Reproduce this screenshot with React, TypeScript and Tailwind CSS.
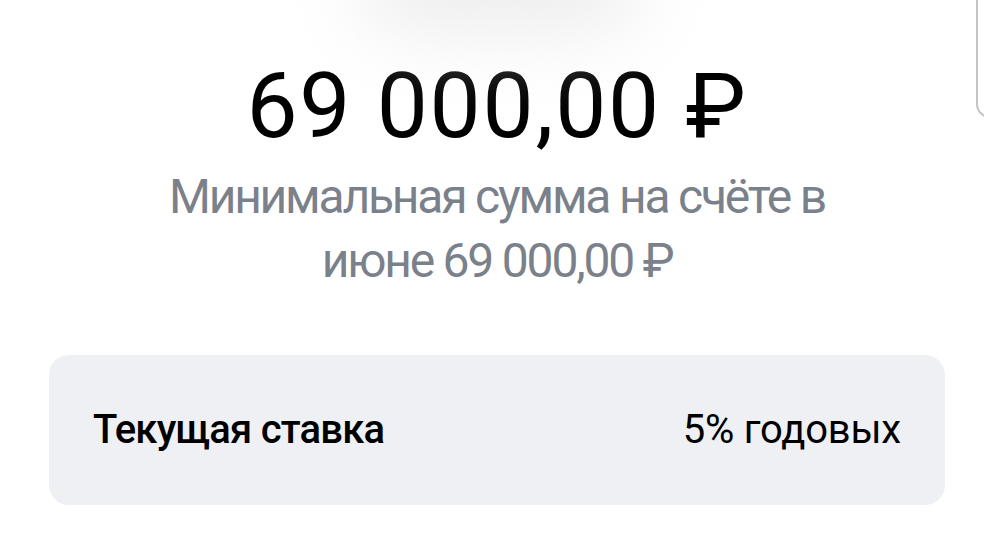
export default function App() {
  return (
    <div className="relative h-[554px] w-[984px] overflow-hidden bg-white font-['Roboto',sans-serif]">
      {/* soft shadow of the avatar circle above */}
      <div className="pointer-events-none absolute left-[360px] top-[-70px] h-[100px] w-[280px] rounded-full bg-[#ececec] blur-2xl" />
      {/* edge of the side panel */}
      <div className="pointer-events-none absolute right-[-20px] top-[-20px] h-[138px] w-[28px] rounded-bl-[14px] border-b-2 border-l-2 border-[#c4c4c4]" />

      <div className="flex flex-col items-center pl-[49px] pr-[39px] pt-[56px]">
        <div className="text-[91px] leading-[100px] tracking-[1.8px] text-black">69 000,00 ₽</div>
        <p className="mt-[9px] text-center text-[48px] leading-[64px] tracking-[-2.2px] text-[#7b818a]">
          Минимальная сумма на счёте в
          <br />
          июне 69 000,00 ₽
        </p>

        <div className="mt-[62px] flex h-[150px] w-full items-center justify-between rounded-[20px] bg-[#eff0f4] px-[44px]">
          <span className="text-[40px] font-medium tracking-[-0.8px] text-black">Текущая ставка</span>
          <span className="text-[40px] tracking-[-0.2px] text-black">5% годовых</span>
        </div>
      </div>
    </div>
  )
}
